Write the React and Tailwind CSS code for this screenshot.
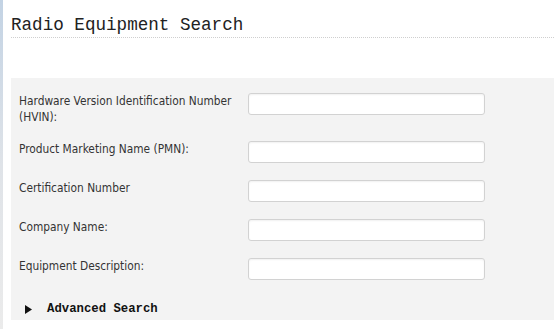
export default function App() {
  const rows = [
    { label: "Hardware Version Identification Number (HVIN):", h: "h-[48px]" },
    { label: "Product Marketing Name (PMN):", h: "h-[39px]" },
    { label: "Certification Number", h: "h-[39px]" },
    { label: "Company Name:", h: "h-[39px]" },
    { label: "Equipment Description:", h: "h-[39px]" },
  ];
  return (
    <div className="flex h-[329px] w-[554px] bg-white overflow-hidden">
      <div className="w-[3px] shrink-0 bg-gradient-to-b from-[#c3d3e4] via-[#dfe3e8] to-[#ebebeb]" />
      <div className="flex-1 pl-[8px] flex flex-col">
        <div className="h-[38px] pt-[14px] border-b border-dotted border-[#cfcfcf]">
          <h1 className="text-[17.6px] leading-[22px] text-[#222] font-['Liberation_Mono',monospace]">
            Radio Equipment Search
          </h1>
        </div>
        <div className="mt-[40px] bg-[#f3f3f3] h-[242px] pt-[15px] pl-[8px]">
          {rows.map((r, i) => (
            <div key={i} className={`flex items-start ${r.h}`}>
              <label className="w-[229px] text-[11.8px] leading-[16px] text-[#333] font-['DejaVu_Sans_Condensed','DejaVu_Sans',sans-serif]">
                {r.label}
              </label>
              <input
                type="text"
                className="w-[237px] h-[22px] bg-white border border-[#d2d2d2] rounded-[3px] shadow-[inset_0_1px_2px_rgba(0,0,0,0.06)] outline-none"
              />
            </div>
          ))}
          <div className="flex items-center h-[24px] pl-[6px]">
            <svg width="7" height="9" viewBox="0 0 7 9" className="shrink-0">
              <polygon points="0,0 7,4.5 0,9" fill="#111" />
            </svg>
            <span className="ml-[15px] text-[12.3px] font-bold text-[#111] font-['Liberation_Mono',monospace]">
              Advanced Search
            </span>
          </div>
        </div>
      </div>
    </div>
  );
}
